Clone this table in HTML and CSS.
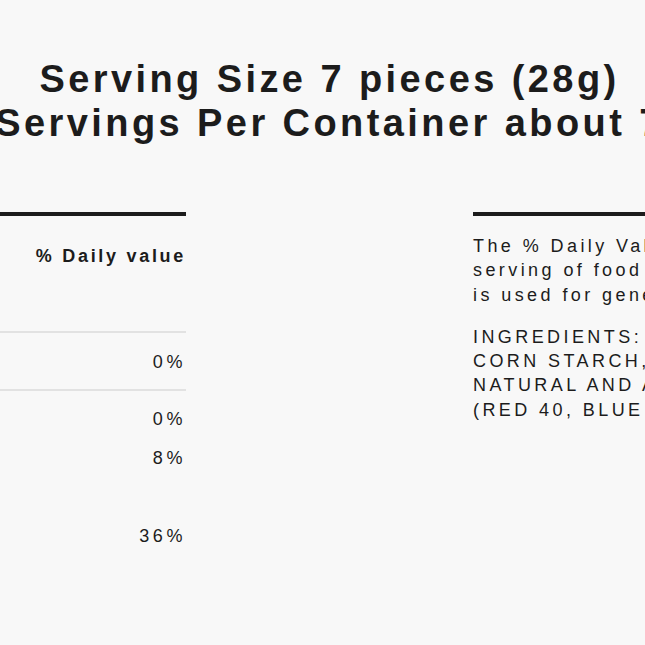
FILE: index.html
```html
<!DOCTYPE html>
<html lang="en">
<head>
<meta charset="utf-8">
<title>Nutrition Facts</title>
<link rel="stylesheet" href="styles.css">
</head>
<body>
<main class="label">
  <h1 class="serving">Serving Size 7 pieces (28g)<br>Servings Per Container about 7</h1>
  <div class="panels">
    <section class="facts">
      <div class="facts-head">
        <span class="amount">Amount per serving</span>
        <span class="dv-head">% Daily value</span>
      </div>
      <div class="row row-first"><span class="nutrient">Total Fat 0g</span><span class="dv">0%</span></div>
      <div class="row"><span class="nutrient">Sodium 0mg</span><span class="dv">0%</span></div>
      <div class="row"><span class="nutrient">Total Carb. 25g</span><span class="dv">8%</span></div>
      <div class="row"><span class="nutrient sub">Sugars 18g</span><span class="dv"></span></div>
      <div class="row"><span class="nutrient sub">Added 18g</span><span class="dv">36%</span></div>
    </section>
    <section class="notes">
      <p>The % Daily Value (DV) tells you how much a nutrient in a<br>serving of food contributes to a daily diet. 2,000 calories a day<br>is used for general nutrition advice.</p>
      <p>INGREDIENTS: SUGAR, CORN SYRUP, MODIFIED<br>CORN STARCH, CONTAINS 2% OR LESS OF: CITRIC ACID,<br>NATURAL AND ARTIFICIAL FLAVORS, COLORS<br>(RED 40, BLUE 1, YELLOW 5).</p>
    </section>
  </div>
</main>
</body>
</html>
```

FILE: styles.css
```css
html, body {
  margin: 0;
}

body {
  background: #f8f8f8;
  color: #1c1c1c;
  font-family: "Liberation Sans", Arial, sans-serif;
  font-size: 18px;
  letter-spacing: 0.19em;
  overflow-x: hidden;
  display: flex;
  justify-content: center;
  padding-left: 14px;
}

.label {
  flex: none;
  width: 1487px;
  padding-top: 57px;
}

.serving {
  margin: 0;
  font-size: 38px;
  line-height: 44px;
  font-weight: 700;
  letter-spacing: 0.09em;
  text-align: center;
}

.panels {
  display: grid;
  grid-template-columns: 600px 600px;
  column-gap: 287px;
  margin-top: 67px;
}

.facts,
.notes {
  border-top: 4px solid #1c1c1c;
}

.facts-head {
  box-sizing: border-box;
  height: 117px;
  padding-top: 28px;
  display: flex;
  justify-content: space-between;
  align-items: flex-start;
  font-weight: 700;
  line-height: 24px;
  letter-spacing: 0.15em;
  border-bottom: 2px solid #e2e2e2;
}

.row {
  display: flex;
  justify-content: space-between;
  line-height: 39px;
}

.row-first {
  padding: 10px 0 7px;
  border-bottom: 2px solid #e2e2e2;
}

.row-first + .row {
  padding-top: 9px;
}

.nutrient {
  font-weight: 700;
}

.nutrient.sub {
  font-weight: 400;
  padding-left: 20px;
}

.dv {
  letter-spacing: 0.2em;
}

.notes p {
  margin: 18px 0 0;
  line-height: 1.35;
  white-space: nowrap;
}
```
